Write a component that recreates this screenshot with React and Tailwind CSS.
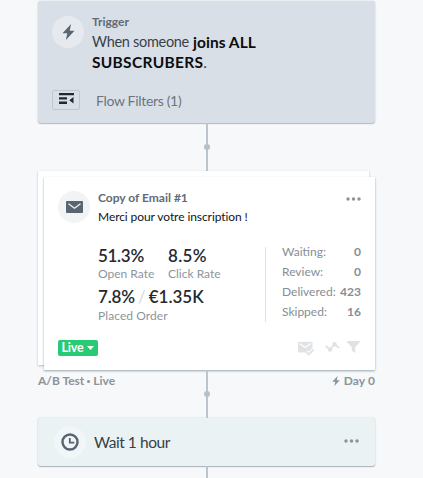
import React from 'react';

const stats = [
  { label: 'Waiting:', value: '0' },
  { label: 'Review:', value: '0' },
  { label: 'Delivered:', value: '423' },
  { label: 'Skipped:', value: '16' },
];

function Bolt({ className }) {
  return (
    <svg className={className} viewBox="0 0 12 16" fill="currentColor">
      <path d="M8.6 0 0 9.2h4.8L3.4 16 12 6.8H7.2z" />
    </svg>
  );
}

function Dots() {
  return (
    <svg className="h-1 w-[15px]" viewBox="0 0 15 4" fill="#8b949d">
      <circle cx="2" cy="2" r="1.75" />
      <circle cx="7.5" cy="2" r="1.75" />
      <circle cx="13" cy="2" r="1.75" />
    </svg>
  );
}

function Connector() {
  return (
    <div className="flex h-12 w-[338px] items-center justify-center">
      <div className="flex h-full w-[2px] items-center justify-center bg-[#bcc5cd]">
        <span className="size-[6px] shrink-0 rounded-full bg-[#b6c0c8]" />
      </div>
    </div>
  );
}

function TriggerCard() {
  return (
    <div className="h-[122px] rounded-[3px] bg-[#d9dfe7] pl-[14px] pt-[14px] shadow-[0_1px_1px_#b3bcc5,0_0_2px_#cdd4da]">
      <div className="flex">
        <div className="mt-[1px] flex size-8 items-center justify-center rounded-full bg-[#e6eaee]">
          <Bolt className="h-4 w-[13px] text-[#596570]" />
        </div>
        <div className="ml-2">
          <p className="text-[12px] font-bold leading-[13px] text-[#626b75]">Trigger</p>
          <div className="mt-[4px] flex gap-1 text-[14.5px] leading-5 text-[#393f47]">
            <span className="tracking-[-0.3px]">When someone</span>
            <b className="text-[15.5px] tracking-[0.05px] text-[#0b0d0f]">joins ALL</b>
          </div>
          <div className="flex text-[15.5px] leading-5 text-[#393f47]">
            <b className="tracking-[0.3px] text-[#0b0d0f]">SUBSCRUBERS</b>
            <span>.</span>
          </div>
        </div>
      </div>
      <div className="mt-[16px] flex items-center">
        <div className="flex h-5 w-7 items-center justify-center rounded-[2px] border border-[#bfc7cf]">
          <svg className="mb-[2px] h-[11px] w-[15px]" viewBox="0 0 15 11" fill="#23282d">
            <path d="M0 0h15v2.2H0zM0 4.2h8v2.4H0zM0 8.6h8V11H0zM14.5 4v6.5L10.3 7.2z" />
          </svg>
        </div>
        <span className="ml-4 mt-[3px] text-[14px] leading-5 tracking-[-0.32px] text-[#6c757e]">Flow Filters (1)</span>
      </div>
    </div>
  );
}

function EmailCard() {
  return (
    <div className="relative h-[199px]">
      <div className="absolute left-0 top-0 h-[194px] w-[331px] bg-white shadow-[0_1px_2px_#b5bcc4]" />
      <div className="relative top-[6px] ml-[6px] flex h-[193px] w-[331px] flex-col bg-white shadow-[0_1px_2px_#9ba5af]">
        <div className="flex pl-[14px] pt-[14px]">
          <div className="flex size-8 items-center justify-center rounded-full bg-[#f1f3f5]">
            <svg className="h-3 w-[17px]" viewBox="0 0 17 12">
              <rect width="17" height="12" rx="0.8" fill="#596570" />
              <path d="m2.5 2.8 6 4.4 6-4.4" fill="none" stroke="#f1f3f5" strokeWidth="1.3" />
            </svg>
          </div>
          <div className="ml-2 mt-[-1px] grow">
            <p className="text-[12px] font-bold leading-[15px] text-[#626b75]">Copy of Email #1</p>
            <p className="mt-[4px] text-[12px] leading-4 tracking-[-0.08px] text-[#111418] [font-variant-ligatures:none]">
              Merci pour votre inscription !
            </p>
          </div>
          <div className="mr-[14px] mt-[6px] flex self-start">
            <Dots />
          </div>
        </div>
        <div className="mt-[22px] flex pl-[54px]">
          <div className="h-[75px] w-[168px] border-r border-[#e1e4e7]">
            <div className="flex">
              <div className="w-[70px]">
                <p className="mt-[-1px] text-[17px] font-semibold leading-5 tracking-[-0.3px] text-[#24292f]">51.3%</p>
                <p className="text-[12px] leading-4 text-[#8d959d]">Open Rate</p>
              </div>
              <div>
                <p className="mt-[-1px] text-[17px] font-semibold leading-5 tracking-[0.3px] text-[#24292f]">8.5%</p>
                <p className="text-[12px] leading-4 text-[#8d959d]">Click Rate</p>
              </div>
            </div>
            <div className="mt-[5px] flex text-[17px] font-semibold leading-5 text-[#24292f]">
              <span className="tracking-[-0.2px]">7.8%</span>
              <span className="w-[14px] text-center font-normal text-[#d5d9dd]">/</span>
              <span>€1.35K</span>
            </div>
            <p className="mt-[1px] text-[12px] leading-4 tracking-[0.08px] text-[#8d959d]">Placed Order</p>
          </div>
          <div className="ml-4 mt-[-5px] w-[79px]">
            {stats.map((s) => (
              <div key={s.label} className="flex h-5 items-center justify-between text-[12px] leading-4 text-[#858e97]">
                <span>{s.label}</span>
                <span className="font-bold">{s.value}</span>
              </div>
            ))}
          </div>
        </div>
        <div className="mb-[14px] mt-auto flex items-center justify-between pl-[14px] pr-[15px]">
          <div className="flex h-4 w-10 items-center justify-center gap-1 rounded-[2px] bg-[#29ca75] text-[12.5px] font-bold leading-4 tracking-[-0.2px] text-white">
            Live
            <svg className="h-1 w-[7px]" viewBox="0 0 7 4" fill="currentColor">
              <path d="M0 0h7L3.5 4z" />
            </svg>
          </div>
          <div className="flex items-center text-[#e0e3e6]">
            <svg className="h-[15px] w-4" viewBox="0 0 16 15">
              <path d="M0 .8h14.5V11.5H0z" fill="currentColor" />
              <path d="m1.5 2.5 5.7 4 5.7-4" fill="none" stroke="#fff" strokeWidth="1.2" />
              <path d="m8 10.8 2.7 2.7 5-5" fill="none" stroke="#fff" strokeWidth="4" />
              <path d="m8 10.8 2.7 2.7 5-5" fill="none" stroke="currentColor" strokeWidth="1.9" />
            </svg>
            <svg className="mb-[2px] ml-[11px] h-[10px] w-[15px]" viewBox="0 0 15 10">
              <path d="M.5 4 5 7.5l4.5-5L14.3 6" fill="none" stroke="currentColor" strokeWidth="1.7" />
              <circle cx="5" cy="7.5" r="2.2" fill="currentColor" />
              <circle cx="9.5" cy="2.3" r="2.2" fill="currentColor" />
            </svg>
            <svg className="mb-[2px] ml-[7px] h-3 w-[13px]" viewBox="0 0 13 12" fill="currentColor">
              <path d="M0 0h13v1L8.3 6.3V12L4.7 9.8V6.3L0 1z" />
            </svg>
          </div>
        </div>
      </div>
    </div>
  );
}

function WaitCard() {
  return (
    <div className="flex h-12 items-center rounded-[3px] bg-[#eaf2f4] pl-4 pr-[16px] shadow-[0_1px_1px_#a9b2bb,0_0_2px_#cdd4da]">
      <div className="flex size-8 items-center justify-center rounded-full bg-[#f1f6f8]">
        <svg className="size-[18px]" viewBox="0 0 18 18" fill="none" stroke="#596570" strokeWidth="2.4">
          <circle cx="9" cy="9" r="7.5" />
          <path d="M8.8 5v4.7h4.5" strokeWidth="1.8" />
        </svg>
      </div>
      <span className="ml-2 grow text-[15.5px] leading-5 tracking-[-0.45px] text-[#393f47]">Wait 1 hour</span>
      <div className="mb-[3px] flex">
        <Dots />
      </div>
    </div>
  );
}

export default function App() {
  return (
    <div className="h-[478px] w-[423px] overflow-hidden bg-[#f6f8fa] pl-[38px] pt-[1px] font-['Lato',sans-serif]">
      <div className="flex w-[337px] flex-col">
        <TriggerCard />
        <Connector />
        <EmailCard />
        {/* variation status and day marker on either side of the line */}
        <div className="relative">
          <Connector />
          <div className="absolute inset-x-0 top-[3px] flex items-center justify-between text-[12px] font-bold leading-4 text-[#8b939b]">
            <span className="flex items-center gap-[3px]">
              A/B Test
              <i className="size-[3px] rounded-full bg-[#8b939b]" />
              Live
            </span>
            <span className="flex items-center gap-1">
              <Bolt className="h-[10px] w-2" />
              <span className="tracking-[0.1px]">Day 0</span>
            </span>
          </div>
        </div>
        <WaitCard />
        <div className="flex w-[338px] justify-center">
          <div className="h-[14px] w-[2px] bg-[#bcc5cd]" />
        </div>
      </div>
    </div>
  );
}
